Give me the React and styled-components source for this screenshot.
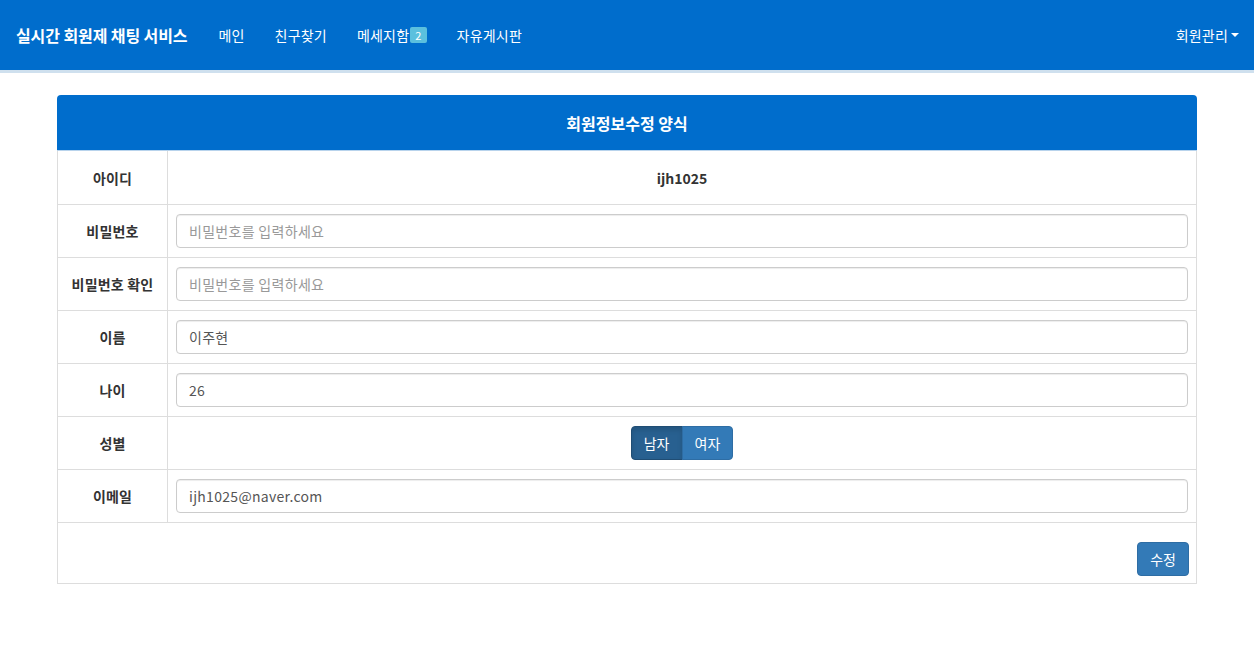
import React from "react";
import styled, { createGlobalStyle } from "styled-components";

const GlobalStyle = createGlobalStyle`
  body {
    margin: 0;
    background: #fff;
    font-family: "Noto Sans CJK KR", "Noto Sans", "Liberation Sans", sans-serif;
    font-size: 14px;
    color: #333;
  }
  * { box-sizing: border-box; }
`;

const NavBar = styled.nav`
  height: 73px;
  background: #006dcc;
  border-bottom: 3px solid #cfe0ee;
  display: flex;
  align-items: center;
  justify-content: space-between;
  padding: 0 15px 0 16px;
`;

const NavLeft = styled.div`
  display: flex;
  align-items: center;
`;

const Brand = styled.a`
  color: #fff;
  font-size: 16px;
  font-weight: 700;
  letter-spacing: -0.1px;
  margin-right: 16px;
`;

const NavItem = styled.a`
  color: #fff;
  font-size: 14px;
  padding: 0 ${(p) => (p.$edge ? 0 : 15)}px;
  display: flex;
  align-items: center;
  letter-spacing: 0.2px;
`;

const Badge = styled.span`
  background: #5bc0de;
  color: #fff;
  font-size: 11px;
  line-height: 16px;
  padding: 0 5px;
  border-radius: 2px;
  margin-left: 1px;
`;

const Caret = styled.span`
  display: inline-block;
  width: 0;
  height: 0;
  margin-left: 3px;
  border-top: 4px solid #fff;
  border-left: 4px solid transparent;
  border-right: 4px solid transparent;
`;

const Container = styled.div`
  width: 1140px;
  margin: 22px auto 0;
`;

const Table = styled.div`
  border: 1px solid #ddd;
  border-top: none;
`;

const Header = styled.div`
  height: 56px;
  background: #006dcc;
  border-radius: 4px 4px 0 0;
  border-bottom: 1px solid #b8d3ec;
  color: #fff;
  font-weight: 700;
  font-size: 16px;
  display: flex;
  align-items: center;
  justify-content: center;
`;

const Row = styled.div`
  display: grid;
  grid-template-columns: 110px 1fr;
  height: 53px;
  border-top: ${(p) => (p.$first ? "none" : "1px solid #ddd")};
`;

const Label = styled.div`
  border-right: 1px solid #ddd;
  display: flex;
  align-items: center;
  justify-content: center;
  font-weight: 700;
  font-size: 14px;
  letter-spacing: 0.2px;
  color: #333;
`;

const Cell = styled.div`
  display: flex;
  align-items: center;
  padding: 0 8px;
`;

const Value = styled.div`
  flex: 1;
  text-align: center;
  font-weight: 700;
  font-size: 14px;
`;

const Input = styled.input`
  width: 100%;
  height: 34px;
  border: 1px solid #ccc;
  border-radius: 4px;
  box-shadow: inset 0 1px 1px rgba(0, 0, 0, 0.075);
  padding: 6px 12px;
  font-family: inherit;
  font-size: 14px;
  letter-spacing: 0.3px;
  color: #555;
  outline: none;
  &::placeholder {
    color: #999;
  }
`;

const ToggleGroup = styled.div`
  display: flex;
  margin: 0 auto;
`;

const Toggle = styled.button`
  height: 34px;
  padding: 0 12px;
  font-family: inherit;
  font-size: 14px;
  color: #fff;
  border: 1px solid ${(p) => (p.$active ? "#204d74" : "#2e6da4")};
  background: ${(p) => (p.$active ? "#286090" : "#337ab7")};
  box-shadow: ${(p) => (p.$active ? "inset 0 3px 5px rgba(0,0,0,0.125)" : "none")};
  &:first-child {
    border-radius: 4px 0 0 4px;
  }
  &:last-child {
    border-radius: 0 4px 4px 0;
    margin-left: -1px;
  }
`;

const Footer = styled.div`
  border-top: 1px solid #ddd;
  height: 61px;
  display: flex;
  justify-content: flex-end;
  align-items: flex-end;
  padding: 0 7px 7px 0;
`;

const SubmitButton = styled.button`
  height: 34px;
  padding: 0 12px;
  background: #337ab7;
  border: 1px solid #2e6da4;
  border-radius: 4px;
  color: #fff;
  font-family: inherit;
  font-size: 14px;
`;

const fields = [
  { label: "비밀번호", placeholder: "비밀번호를 입력하세요", type: "password" },
  { label: "비밀번호 확인", placeholder: "비밀번호를 입력하세요", type: "password" },
  { label: "이름", value: "이주현" },
  { label: "나이", value: "26" },
];

const App = () => (
  <>
    <GlobalStyle />
    <NavBar>
      <NavLeft>
        <Brand>실시간 회원제 채팅 서비스</Brand>
        <NavItem>메인</NavItem>
        <NavItem>친구찾기</NavItem>
        <NavItem>
          메세지함<Badge>2</Badge>
        </NavItem>
        <NavItem>자유게시판</NavItem>
      </NavLeft>
      <NavItem $edge>
        회원관리<Caret />
      </NavItem>
    </NavBar>
    <Container>
      <Header>회원정보수정 양식</Header>
      <Table>
        <Row $first>
          <Label>아이디</Label>
          <Cell>
            <Value>ijh1025</Value>
          </Cell>
        </Row>
        {fields.map((f) => (
          <Row key={f.label}>
            <Label>{f.label}</Label>
            <Cell>
              <Input
                type={f.type || "text"}
                placeholder={f.placeholder}
                defaultValue={f.value}
              />
            </Cell>
          </Row>
        ))}
        <Row>
          <Label>성별</Label>
          <Cell>
            <ToggleGroup>
              <Toggle $active>남자</Toggle>
              <Toggle>여자</Toggle>
            </ToggleGroup>
          </Cell>
        </Row>
        <Row>
          <Label>이메일</Label>
          <Cell>
            <Input defaultValue="ijh1025@naver.com" />
          </Cell>
        </Row>
        <Footer>
          <SubmitButton>수정</SubmitButton>
        </Footer>
      </Table>
    </Container>
  </>
);

export default App;
